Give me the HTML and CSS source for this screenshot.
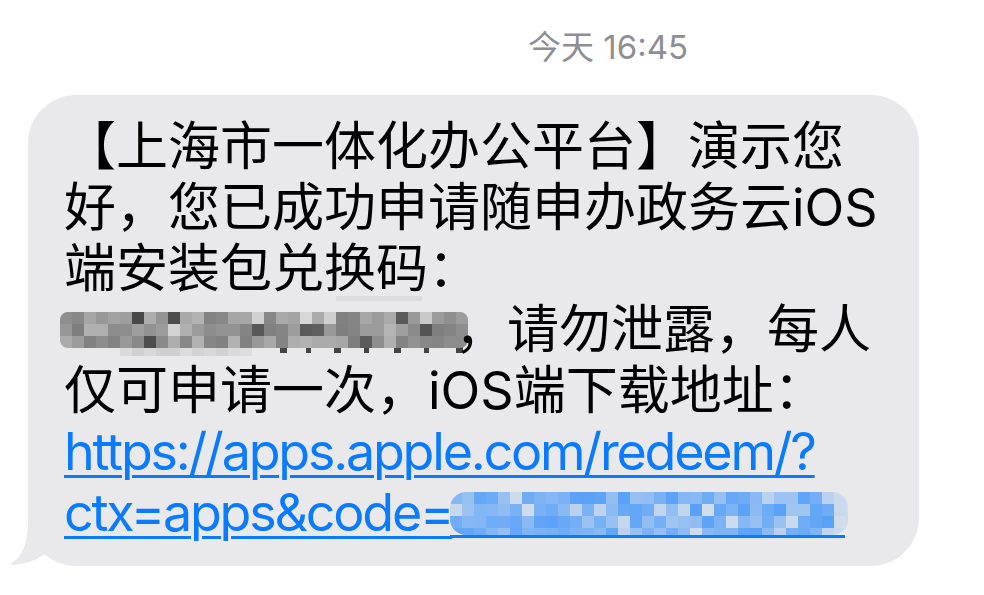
FILE: index.html
```html
<!DOCTYPE html>
<html lang="zh-CN">
<head>
    <meta charset="UTF-8">
    <meta name="viewport" content="width=device-width, initial-scale=1.0">
    <title>信息</title>
    <link rel="stylesheet" href="styles.css">
</head>
<body>
    <div class="thread">
        <div class="stamp">今天 16:45</div>

        <div class="bubble">
            <p class="msg">【上海市一体化办公平台】演示您<br>好，您已成功申请随申办政务云iOS<br>端安装包兑换码：<br><span class="mask"><svg class="mask-art" id="maskGray" width="420" height="61"></svg></span>，请勿泄露，每人<br>仅可申请一次，iOS端下载地址：<br><a class="link" href="#">https://apps.apple.com/redeem/?<br>ctx=apps&amp;code=<span class="mask"><svg class="mask-art blue" id="maskBlue" width="410" height="61"></svg></span></a></p>

            <!-- the little tail in the bottom left corner -->
            <svg class="tail" width="42" height="47" viewBox="0 0 42 47">
                <path d="M18 0 C18 24 13 37 0 45.5 C12 46.5 27 41.5 36 34 L40 0 Z" fill="#e9e9eb"/>
            </svg>
        </div>
    </div>

    <script>
        // pixelated cover for the redeem code, drawn with a fixed seed so it looks the same every time
        function makeRandom(seed) {
            return function() {
                seed = (seed + 0x6D2B79F5) | 0;
                let t = Math.imul(seed ^ (seed >>> 15), 1 | seed);
                t = (t + Math.imul(t ^ (t >>> 7), 61 | t)) ^ t;
                return ((t ^ (t >>> 14)) >>> 0) / 4294967296;
            };
        }

        const NS = 'http://www.w3.org/2000/svg';
        const CELL = 12;

        function addEl(parent, tag, attrs) {
            const el = document.createElementNS(NS, tag);
            Object.keys(attrs).forEach(k => el.setAttribute(k, attrs[k]));
            parent.appendChild(el);
            return el;
        }

        function addRect(parent, x, y, w, h, fill) {
            return addEl(parent, 'rect', { x: x, y: y, width: w, height: h, fill: fill });
        }

        function mix(a, b, t) {
            return 'rgb(' + a.map((v, i) => Math.round(v + (b[i] - v) * t)).join(',') + ')';
        }

        function clippedGroup(svg, id, x, y, w, h, rx) {
            const defs = addEl(svg, 'defs', {});
            const clip = addEl(defs, 'clipPath', { id: id });
            addEl(clip, 'rect', { x: x, y: y, width: w, height: h, rx: rx });
            return addEl(svg, 'g', { 'clip-path': 'url(#' + id + ')' });
        }

        // grey block on line 4
        const gray = document.getElementById('maskGray');
        let rnd = makeRandom(17);
        addRect(gray, 276, -3, 86, 5, '#dcdcde');
        // lighter fringe and the feet of the letters that stick out under the block
        for (let col = 5; col < 16; col++) {
            addRect(gray, col * CELL, 46, CELL, 11, mix([0, 0, 0], [255, 255, 255], (205 + rnd() * 20) / 255));
        }
        [[220, 7], [246, 5], [274, 7], [304, 5], [334, 7], [364, 5], [396, 7]].forEach(p => {
            addRect(gray, p[0], 47, p[1], 7, '#444');
        });
        const grayCells = clippedGroup(gray, 'clipGray', 0, 13, 408, 36, 8);
        for (let row = 0; row < 3; row++) {
            for (let col = 0; col < 34; col++) {
                let v = 125 + rnd() * 55;
                const pick = rnd();
                if (pick < 0.08) v = 70 + rnd() * 30;
                else if (pick > 0.92) v = 200 + rnd() * 25;
                addRect(grayCells, col * CELL, 13 + row * CELL, CELL, CELL, mix([0, 0, 0], [255, 255, 255], v / 255));
            }
        }

        // blue block at the end of the link
        const blue = document.getElementById('maskBlue');
        rnd = makeRandom(42);
        const linkBlue = [10, 122, 255];
        const bubbleGray = [233, 233, 235];
        addRect(blue, 0, 53, 395, 3, '#0a7aff');
        const blueCells = clippedGroup(blue, 'clipBlue', 0, 10, 398, 43, 16);
        for (let row = 0; row < 4; row++) {
            for (let col = 0; col < 34; col++) {
                let t = 0.35 + rnd() * 0.33;
                if (rnd() > 0.85) t = 0.78 + rnd() * 0.12;
                if (col > 31) t = 0.78 + rnd() * 0.12;
                addRect(blueCells, col * CELL, 10 + row * CELL, CELL, CELL, mix(linkBlue, bubbleGray, t));
            }
        }
    </script>
</body>
</html>
```

FILE: styles.css
```css
body {
    margin: 0;
    background-color: #ffffff;
    font-family: Inter, "Noto Sans CJK SC", sans-serif;
}
.thread {
    width: 984px;
    height: 595px;
    overflow: hidden;
}
.stamp {
    padding: 27px 0 0 232px;
    height: 41px;
    line-height: 41px;
    text-align: center;
    font-size: 33px;
    color: #8e8e93;
}
.bubble {
    position: relative;
    width: 891px;
    margin: 27px 0 0 28px;
    padding: 21px 0 23px;
    box-sizing: border-box;
    background-color: #e9e9eb;
    border-radius: 48px;
}
.msg {
    margin: 0;
    padding-left: 36px;
    font-size: 52px;
    line-height: 61px;
    color: #000000;
    white-space: nowrap;
}
.link {
    color: #0a7aff;
    letter-spacing: -2.2px;
    text-decoration: underline;
    text-decoration-thickness: 3px;
    text-underline-offset: 5px;
}
.mask {
    display: inline-block;
    width: 391px;
    height: 61px;
    vertical-align: top;
}
.mask-art {
    display: block;
    margin-left: -4px;
    overflow: visible;
}
.mask-art.blue {
    margin-left: -2px;
}
.tail {
    position: absolute;
    left: -18px;
    bottom: 0;
}
```
